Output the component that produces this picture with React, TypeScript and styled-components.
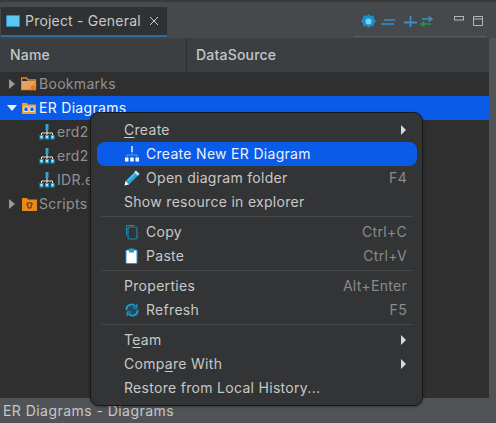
import React from 'react'
import styled, { createGlobalStyle } from 'styled-components'

const Global = createGlobalStyle`
  html, body { margin: 0; padding: 0; background: #505456; }
  body { font-family: Inter, "Liberation Sans", sans-serif; letter-spacing: 0.3px; }
`

const RowIcon = () => (
  <svg width="16" height="16" viewBox="0 0 16 16">
    <rect x="6.5" y="0" width="3" height="6" fill="#2ea3d8" />
    <path d="M8 6v3M2.5 11V9h11v2M8 9v2" stroke="#e8e8e8" strokeWidth="1" fill="none" />
    <rect x="0.5" y="11" width="4" height="4.5" fill="#19a3cf" />
    <rect x="6" y="11" width="4" height="4.5" fill="#19a3cf" />
    <rect x="11.5" y="11" width="4" height="4.5" fill="#19a3cf" />
    <path d="M1.5 13h2M7 13h2M12.5 13h2" stroke="#fff" strokeWidth="1.4" />
  </svg>
)

const WhiteDiagramIcon = () => (
  <svg width="16" height="16" viewBox="0 0 16 16">
    <rect x="7" y="0" width="2" height="6" fill="#9fd4f5" />
    <path d="M8 6v3M3 11V9h10v2" stroke="#4f9cf0" strokeWidth="1" fill="none" />
    <rect x="1" y="11.5" width="3.5" height="4" fill="#fff" />
    <rect x="6.2" y="11.5" width="3.5" height="4" fill="#fff" />
    <rect x="11.5" y="11.5" width="3.5" height="4" fill="#fff" />
  </svg>
)

const PencilIcon = () => (
  <svg width="16" height="16" viewBox="0 0 16 16">
    <path d="M12 .5l3.500 3.500L5 14.500 1.500 11z" fill="#2aa5d6" />
    <path d="M12 .5l3.500 3.500-1.800 1.800-3.500-3.500z" fill="#bfe6f5" />
    <path d="M1.500 11L5 14.500.5 15.500z" fill="#fff" />
    <path d="M4 10.500l7-7" stroke="#8fd8f2" strokeWidth="1" />
  </svg>
)

const CopyIcon = () => (
  <svg width="16" height="16" viewBox="0 0 16 16" fill="none" stroke="#1f86ad" strokeWidth="1">
    <path d="M2.500 11.500V1.500h8" />
    <rect x="4" y="3" width="9" height="12" rx="1.500" strokeWidth="1.200" />
  </svg>
)

const PasteIcon = () => (
  <svg width="16" height="16" viewBox="0 0 16 16">
    <rect x="2" y="2" width="11" height="13.500" rx="1" fill="#fff" stroke="#1f9cc8" strokeWidth="1" />
    <rect x="5" y="0.500" width="5" height="4" fill="#1f9cc8" />
  </svg>
)

const RefreshIcon = () => (
  <svg width="16" height="16" viewBox="0 0 16 16" fill="none">
    <path d="M8 1L15 8 8 15 1 8z" fill="#155a78" opacity="0.6" />
    <path d="M2.500 8A5 5 0 0 1 11.500 4.500M13.500 8A5 5 0 0 1 4.500 11.500" stroke="#1f9cc8" strokeWidth="1.800" />
    <path d="M12.800 2v4h-4M3.200 14v-4h4" stroke="#1f9cc8" strokeWidth="1.200" />
  </svg>
)

const Page = styled.div`
  position: relative;
  width: 496px;
  height: 423px;
  overflow: hidden;
  display: flex;
  flex-direction: column;
  background: #505456;
`

const TopStrip = styled.div`
  height: 7px;
  background: #47494b;
  border-top: 2px solid #38393a;
  box-sizing: border-box;
`

const TabBar = styled.div`
  height: 31px;
  display: flex;
  align-items: stretch;
  justify-content: space-between;
  background: #46494b;
`

const Tab = styled.div`
  width: 166px;
  margin-left: 1px;
  height: 30px;
  box-sizing: border-box;
  padding-left: 5px;
  display: flex;
  align-items: center;
  gap: 5px;
  background: #2f3133;
  border-bottom: 2px solid #2b6a9e;
  color: #c9c9c9;
  font-size: 14px;
  letter-spacing: 0.2px;
`

const TabIcon = styled.span`
  width: 12px;
  height: 10px;
  background: #5cc6ee;
  border: 1px solid #2d8fc0;
  border-radius: 1px;
`

const TabClose = styled.span`
  margin-left: 3px;
  display: flex;
`

const Toolbar = styled.div`
  width: 132px;
  height: 30px;
  margin-right: 10px;
  box-sizing: border-box;
  padding: 0 2px 0 7px;
  display: flex;
  align-items: center;
  justify-content: space-between;
  border-bottom: 1px solid #5a5d5f;
`

const ToolGroup = styled.div<{ $gap: number }>`
  display: flex;
  align-items: center;
  gap: ${(p) => p.$gap}px;
`

const Main = styled.div`
  flex: 1;
  display: flex;
  flex-direction: column;
  margin-right: 7px;
  min-height: 0;
`

const HeaderRow = styled.div`
  height: 34px;
  display: grid;
  grid-template-columns: 186px 1fr;
  background: #3c3f41;
`

const HeaderCell = styled.div`
  display: flex;
  align-items: center;
  padding: 0 0 2px 9px;
  color: #c4c6c7;
  font-size: 14px;
  font-weight: 500;
  letter-spacing: 0.2px;
  &:first-child {
    padding-left: 10px;
  }
  & + & {
    border-left: 1px solid #2c2e30;
  }
`

const Tree = styled.div`
  flex: 1;
  background: #2f2f2f;
`

const TreeRow = styled.div<{ $selected?: boolean; $indent: number }>`
  height: 24px;
  box-sizing: border-box;
  padding-left: ${(p) => p.$indent}px;
  display: flex;
  align-items: center;
  gap: 2px;
  font-size: 14px;
  color: ${(p) => (p.$selected ? '#f2f6ff' : '#929292')};
  background: ${(p) => (p.$selected ? '#0a5ce8' : 'transparent')};
`

const RowText = styled.span`
  margin-bottom: 2px;
`

const Twist = styled.span<{ $open?: boolean }>`
  width: 0;
  height: 0;
  ${(p) =>
    p.$open
      ? `border-left: 5px solid transparent; border-right: 5px solid transparent; border-top: 6px solid #e8f0ff; margin-left: -2px; margin-right: 2px;`
      : `border-top: 5px solid transparent; border-bottom: 5px solid transparent; border-left: 6px solid #9a9a9a; margin-right: 4px;`}
`

const StatusBar = styled.div`
  height: 25px;
  display: flex;
  align-items: center;
  padding-left: 3px;
  color: #c6c8c9;
  font-size: 14px;
  letter-spacing: 0.45px;
  background: #505456;
`

const Menu = styled.div`
  position: absolute;
  left: 90px;
  top: 112px;
  width: 333px;
  height: 294px;
  box-sizing: border-box;
  padding: 5px 5px 0 6px;
  background: #333436;
  border: 1px solid #17181a;
  border-radius: 9px;
  box-shadow: 0 1px 3px rgba(0, 0, 0, 0.35);
  font-size: 14px;
`

const MenuRow = styled.div<{ $active?: boolean }>`
  height: 24px;
  box-sizing: border-box;
  padding: 0 10px 0 27px;
  display: flex;
  align-items: center;
  border-radius: 8px;
  color: ${(p) => (p.$active ? '#e9f1ff' : '#c8c8c8')};
  background: ${(p) => (p.$active ? '#0a5ce8' : 'transparent')};
`

const MenuIcon = styled.span`
  width: 16px;
  height: 16px;
  margin-right: 6px;
  display: flex;
`

const Label = styled.span`
  flex: 1;
  margin-bottom: 2px;
  u {
    text-underline-offset: 2px;
  }
`

const Shortcut = styled.span`
  margin-bottom: 2px;
  color: #8b8b8b;
`

const Arrow = styled.span`
  width: 0;
  height: 0;
  margin-right: 1px;
  border-top: 5px solid transparent;
  border-bottom: 5px solid transparent;
  border-left: 5px solid #d8d8d8;
`

const Separator = styled.div`
  height: 1px;
  margin: 2px 4px 3px;
  background: #47494b;
`

const App = () => {
  return (
    <Page>
      <Global />
      <TopStrip />
      <TabBar>
        <Tab>
          <TabIcon />
          <RowText>Project - General</RowText>
          <TabClose>
            <svg width="10" height="10" viewBox="0 0 10 10">
              <path d="M1 1l8 8M9 1l-8 8" stroke="#c9c9c9" strokeWidth="1" />
            </svg>
          </TabClose>
        </Tab>
        <Toolbar>
          <ToolGroup $gap={5}>
            <svg width="15" height="15" viewBox="0 0 15 15">
              <path d="M7.500 0l2 2 3-.5.5 3 2 2.500-2 2.500-.5 3-3-.5-2 2-2-2-3 .5-.5-3L0 7l2-2.500.5-3 3 .5z" fill="#1b8fc9" />
              <circle cx="7.500" cy="7.500" r="3" fill="#6fd6f5" />
            </svg>
            <svg width="14" height="8" viewBox="0 0 14 8">
              <path d="M0 6h13M3 2h11" stroke="#3b8fc4" strokeWidth="1.500" />
            </svg>
            <svg width="13" height="13" viewBox="0 0 13 13" style={{ marginLeft: 4 }}>
              <path d="M0 7.500h13M6.500 1v11" stroke="#3b8fc4" strokeWidth="1.800" />
            </svg>
            <svg width="15" height="11" viewBox="0 0 15 11" style={{ marginLeft: -3 }}>
              <path d="M3 3h9M9.500 .5L13 3l-3.500 2.500" stroke="#3b8fc4" strokeWidth="1.500" fill="none" />
              <path d="M12 8H3M5.500 5.500L2 8l3.500 2.500" stroke="#1e9a4a" strokeWidth="1.500" fill="none" />
            </svg>
          </ToolGroup>
          <ToolGroup $gap={8}>
            <svg width="11" height="11" viewBox="0 0 11 11">
              <rect x=".5" y=".5" width="9" height="3.500" fill="none" stroke="#b5b5b5" />
            </svg>
            <svg width="11" height="11" viewBox="0 0 11 11">
              <path d="M.5 .5h9v9h-9zM.5 3h9" fill="none" stroke="#b5b5b5" />
            </svg>
          </ToolGroup>
        </Toolbar>
      </TabBar>
      <Main>
        <HeaderRow>
          <HeaderCell>Name</HeaderCell>
          <HeaderCell>DataSource</HeaderCell>
        </HeaderRow>
        <Tree>
          <TreeRow $indent={9}>
            <Twist />
            <svg width="16" height="14" viewBox="0 0 16 14">
              <path d="M.5 1h5l1.500 2h7.500v9.500H.5z" fill="none" stroke="#e08a2c" strokeWidth="1.400" />
              <path d="M1 4h13v8H1z" fill="#e8a15c" />
              <path d="M12 7l1.200 2.300 2.300.3-1.700 1.600.5 2.300-2.300-1.100-2.200 1.100.5-2.300L8.500 9.600l2.300-.3z" fill="#e8781c" />
            </svg>
            <RowText>Bookmarks</RowText>
          </TreeRow>
          <TreeRow $indent={9} $selected>
            <Twist $open />
            <svg width="14" height="12" viewBox="0 0 14 12" style={{ marginLeft: 1, marginRight: 1 }}>
              <path d="M0 1h5l1 1.500h8V12H0z" fill="#f0a030" />
              <rect x="2" y="5" width="4" height="4.500" fill="#0a5ce8" stroke="#fff" strokeWidth=".8" />
              <rect x="8" y="5" width="4" height="4.500" fill="#0a5ce8" stroke="#fff" strokeWidth=".8" />
            </svg>
            <RowText>ER Diagrams</RowText>
          </TreeRow>
          <TreeRow $indent={39}>
            <RowIcon />
            <RowText>erd2.erd</RowText>
          </TreeRow>
          <TreeRow $indent={39}>
            <RowIcon />
            <RowText>erd2.png</RowText>
          </TreeRow>
          <TreeRow $indent={39}>
            <RowIcon />
            <RowText>IDR.erd</RowText>
          </TreeRow>
          <TreeRow $indent={9}>
            <Twist />
            <svg width="15" height="14" viewBox="0 0 15 14" style={{ marginLeft: 1 }}>
              <path d="M0 1h5l1 1.500h9V14H0z" fill="#e8881a" />
              <path d="M5 6h5v2h-1v3H6V8H5z" fill="none" stroke="#4a3015" strokeWidth="1" />
            </svg>
            <RowText>Scripts</RowText>
          </TreeRow>
        </Tree>
      </Main>
      <StatusBar>ER Diagrams - Diagrams</StatusBar>
      <Menu>
        <MenuRow>
          <Label><u>C</u>reate</Label>
          <Arrow />
        </MenuRow>
        <MenuRow $active>
          <MenuIcon><WhiteDiagramIcon /></MenuIcon>
          <Label>Create New ER Diagram</Label>
        </MenuRow>
        <MenuRow>
          <MenuIcon><PencilIcon /></MenuIcon>
          <Label>Open diagram folder</Label>
          <Shortcut>F4</Shortcut>
        </MenuRow>
        <MenuRow>
          <Label>Show resource in explorer</Label>
        </MenuRow>
        <Separator />
        <MenuRow>
          <MenuIcon><CopyIcon /></MenuIcon>
          <Label>Copy</Label>
          <Shortcut>Ctrl+C</Shortcut>
        </MenuRow>
        <MenuRow>
          <MenuIcon><PasteIcon /></MenuIcon>
          <Label>Paste</Label>
          <Shortcut>Ctrl+V</Shortcut>
        </MenuRow>
        <Separator />
        <MenuRow>
          <Label>Properties</Label>
          <Shortcut>Alt+Enter</Shortcut>
        </MenuRow>
        <MenuRow>
          <MenuIcon><RefreshIcon /></MenuIcon>
          <Label>Refresh</Label>
          <Shortcut>F5</Shortcut>
        </MenuRow>
        <Separator />
        <MenuRow>
          <Label>T<u>e</u>am</Label>
          <Arrow />
        </MenuRow>
        <MenuRow>
          <Label>Comp<u>a</u>re With</Label>
          <Arrow />
        </MenuRow>
        <MenuRow>
          <Label>Restore from Local History...</Label>
        </MenuRow>
      </Menu>
    </Page>
  )
}

export default App
